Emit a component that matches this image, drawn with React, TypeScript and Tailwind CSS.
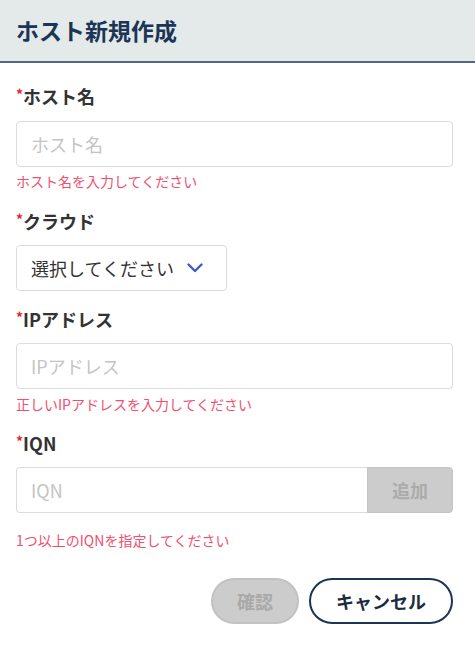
const font = { fontFamily: '"Noto Sans CJK JP", "Noto Sans", sans-serif' };

function Label({ text }: { text: string }) {
  return (
    <div className="flex items-start text-[18px] font-bold leading-[24px] text-[#333]">
      <span className="text-[14px] text-[#e8232f] leading-[20px]">*</span>
      {text}
    </div>
  );
}

function Err({ text }: { text: string }) {
  return <div className="text-[14px] leading-[18px] text-[#f0506e]">{text}</div>;
}

export default function App() {
  return (
    <div className="w-[475px] h-[647px] bg-white" style={font}>
      <div className="h-[63px] bg-[#e4e9ea] border-b-2 border-[#4f6a88] flex items-center pl-4 pb-[1px]">
        <h1 className="text-[23px] font-bold text-[#1b3556]">ホスト新規作成</h1>
      </div>

      <div className="pl-4 pr-[22px] pt-[21px]">
        <Label text="ホスト名" />
        <input
          placeholder="ホスト名"
          className="mt-[13px] w-full h-[46px] rounded border border-[#dcdcdc] px-[14px] text-[18px] placeholder:text-[#c4c4c4] outline-none"
        />
        <div className="mt-[5px]">
          <Err text="ホスト名を入力してください" />
        </div>

        <div className="mt-[19px]">
          <Label text="クラウド" />
        </div>
        <div className="mt-[12px] w-[211px] h-[46px] rounded border border-[#dcdcdc] flex items-center pl-[14px] gap-[13px] text-[18px] text-[#333]">
          選択してください
          <svg width="16" height="10" viewBox="0 0 16 10" fill="none">
            <polyline
              points="1.5,1.5 8,8 14.5,1.5"
              stroke="#3f58c9"
              strokeWidth="2.4"
              strokeLinecap="round"
              strokeLinejoin="round"
            />
          </svg>
        </div>

        <div className="mt-[16px]">
          <Label text="IPアドレス" />
        </div>
        <input
          placeholder="IPアドレス"
          className="mt-[12px] w-full h-[46px] rounded border border-[#dcdcdc] px-[14px] text-[18px] placeholder:text-[#c4c4c4] outline-none"
        />
        <div className="mt-[6px]">
          <Err text="正しいIPアドレスを入力してください" />
        </div>

        <div className="mt-[18px]">
          <Label text="IQN" />
        </div>
        <div className="mt-[12px] flex h-[46px]">
          <input
            placeholder="IQN"
            className="flex-1 min-w-0 h-full rounded-l border border-r-0 border-[#dcdcdc] px-[14px] text-[18px] placeholder:text-[#c4c4c4] outline-none"
          />
          <button className="w-[86px] h-full rounded-r bg-[#cccccc] border border-[#c4c4c4] text-[18px] font-bold text-[#ababab]">
            追加
          </button>
        </div>
        <div className="mt-[18px]">
          <Err text="1つ以上のIQNを指定してください" />
        </div>

        <div className="mt-[29px] flex justify-end gap-[10px]">
          <button className="w-[88px] h-[46px] rounded-full bg-[#cccccc] border-2 border-[#c2c2c2] text-[18px] font-bold text-[#a9a9a9]">
            確認
          </button>
          <button className="w-[144px] h-[46px] rounded-full bg-white border-2 border-[#1b3556] text-[18px] font-bold text-[#1b2b40]">
            キャンセル
          </button>
        </div>
      </div>
    </div>
  );
}
